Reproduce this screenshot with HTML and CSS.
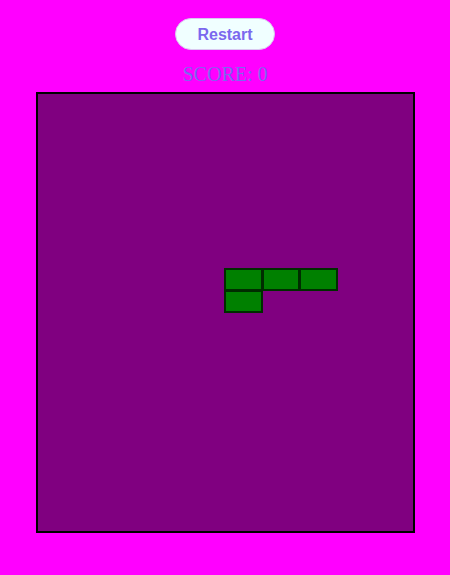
FILE: index.html
```html
<!DOCTYPE html>
<html>
<head>
<meta charset="utf-8">
<link rel="stylesheet" href="styles.css">
</head>
<body>
<div class="game">
  <button class="restart">Restart</button>
  <div class="score">SCORE: 0</div>
  <div class="board">
    <div class="cell" style="grid-column:6;grid-row:9"></div>
    <div class="cell" style="grid-column:7;grid-row:9"></div>
    <div class="cell" style="grid-column:8;grid-row:9"></div>
    <div class="cell" style="grid-column:6;grid-row:10"></div>
  </div>
</div>
</body>
</html>
```
FILE: styles.css
```css
html, body {
  margin: 0;
  padding: 0;
  background: #ff00ff;
}
.game {
  display: flex;
  flex-direction: column;
  align-items: center;
  padding-top: 18px;
}
.restart {
  width: 100px;
  height: 32px;
  box-sizing: border-box;
  background: #f0ffff;
  border: 1px solid #d9c8f0;
  border-radius: 16px;
  color: #7b68ee;
  font-family: "Liberation Sans", Arial, sans-serif;
  font-weight: bold;
  font-size: 16px;
  padding: 1px 0 0 0;
  margin: 0;
}
.score {
  margin-top: 13px;
  font-family: "Liberation Serif", "Times New Roman", serif;
  font-size: 20px;
  line-height: 23px;
  color: #7b68ee;
}
.board {
  margin-top: 6px;
  width: 375px;
  height: 437px;
  border: 2px solid #000;
  background: #800080;
  display: grid;
  grid-template-columns: repeat(10, 1fr);
  grid-template-rows: repeat(20, 1fr);
}
.cell {
  background: #008000;
  border: 2px solid rgba(0, 0, 0, 0.65);
  box-sizing: border-box;
  margin: -1px 0 0 -1px;
}
```
